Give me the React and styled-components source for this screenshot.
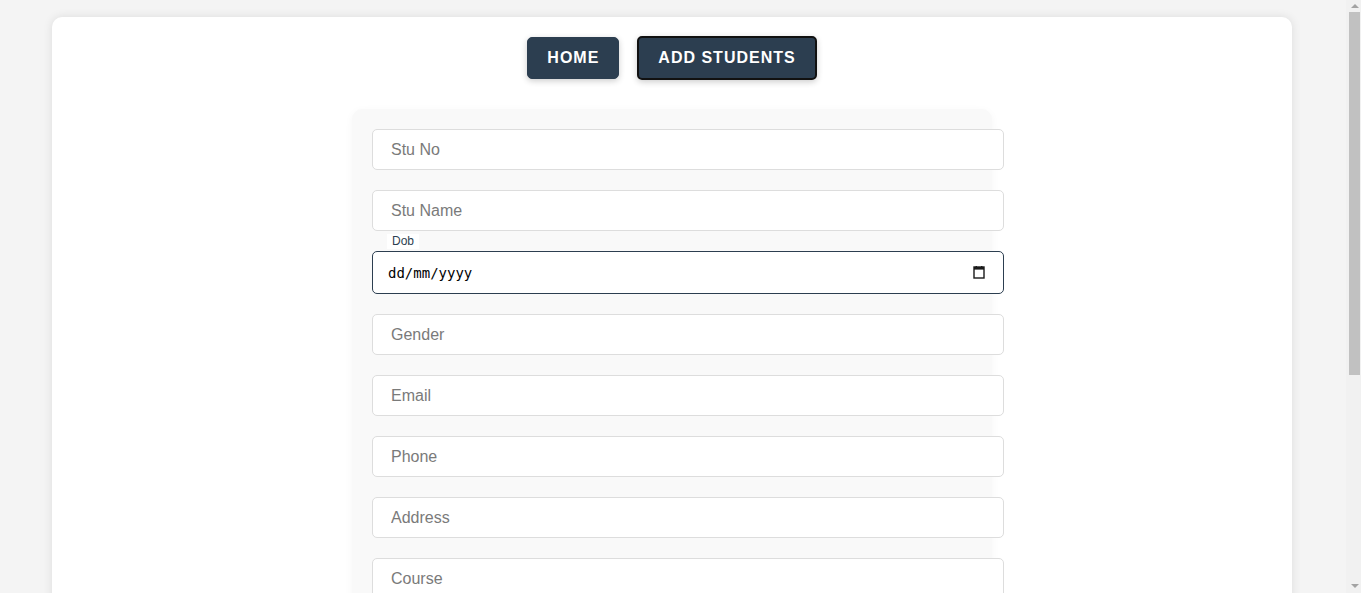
import React, { useState } from "react";
import styled, { createGlobalStyle } from "styled-components";

const GlobalStyle = createGlobalStyle`
  html, body {
    margin: 0;
    background: #f4f4f4;
  }
  body {
    padding: 17px 17px 17px 0;
    font-family: "Liberation Sans", Arial, sans-serif;
  }
  * { box-sizing: border-box; }
`;

/* Decorative classic scrollbar, overlaid on the window's right edge */
const ScrollTrack = styled.div`
  position: fixed;
  top: 0;
  right: 0;
  width: 15px;
  height: 100vh;
  background: #f1f1f1;
  display: flex;
  flex-direction: column;
  align-items: stretch;
`;

const ScrollButton = styled.div`
  height: ${(p) => (p.$down ? "15px" : "12px")};
  display: flex;
  align-items: center;
  justify-content: center;
  padding-left: 2px;
  &::before {
    content: "";
    width: 0;
    height: 0;
    border-left: 4px solid transparent;
    border-right: 4px solid transparent;
    ${(p) =>
      p.$down
        ? "border-top: 4px solid #a3a3a3;"
        : "border-bottom: 4px solid #a3a3a3;"}
  }
`;

const ScrollThumb = styled.div`
  height: 363px;
  margin: 0 1px 0 3px;
  background: #c1c1c1;
`;

const ScrollSpacer = styled.div`
  flex: 1;
`;

const Container = styled.div`
  width: 1240px;
  min-height: 886px;
  margin: 0 auto;
  background: #ffffff;
  border-radius: 10px;
  box-shadow: 0 0 10px rgba(0, 0, 0, 0.1);
  padding: 19px 20px 20px;
  display: flex;
  flex-direction: column;
  align-items: center;
  gap: 29px;
`;

const Nav = styled.nav`
  display: flex;
  justify-content: center;
  align-items: center;
  gap: 18px;
`;

const NavButton = styled.button`
  padding: 11px 19px;
  background: #2c3e50;
  color: #ffffff;
  font-family: "Liberation Sans", Arial, sans-serif;
  font-size: 16px;
  font-weight: 700;
  line-height: 18px;
  letter-spacing: 1px;
  border: ${(p) => (p.$active ? "2px solid #111111" : "1px solid #2c3e50")};
  border-radius: 5px;
  box-shadow: 0 2px 6px rgba(0, 0, 0, 0.2);
  cursor: pointer;
`;

const FormPanel = styled.form`
  width: 640px;
  padding: 20px;
  background: #f9f9f9;
  border-radius: 10px;
  box-shadow: 0 2px 8px rgba(0, 0, 0, 0.04);
  display: flex;
  flex-direction: column;
  gap: 20px;
`;

const TextInput = styled.input`
  display: block;
  width: calc(100% + 32px);
  height: 41px;
  padding: 0 18px;
  border: 1px solid #dddddd;
  border-radius: 5px;
  background: #ffffff;
  font-family: "Liberation Sans", Arial, sans-serif;
  font-size: 16px;
  color: #333333;
  outline: none;
  &::placeholder {
    color: #7a7a7a;
  }
`;

const Field = styled.div`
  position: relative;
  width: calc(100% + 32px);
`;

const FloatLabel = styled.label`
  position: absolute;
  top: -17px;
  left: 15px;
  padding: 0 5px;
  background: #ffffff;
  font-family: "Liberation Sans", Arial, sans-serif;
  font-size: 12px;
  line-height: 15px;
  color: #2c3e50;
`;

const DateInput = styled.input`
  display: block;
  width: 100%;
  height: 43px;
  padding: 0 15px;
  border: 1px solid #2c3e50;
  border-radius: 5px;
  background: #ffffff;
  font-family: "DejaVu Sans Mono", monospace;
  font-size: 14px;
  color: #000000;
  outline: none;
  &::placeholder {
    color: #000000;
  }
`;

const CalendarIcon = styled.svg`
  position: absolute;
  right: 19px;
  top: 15px;
  width: 12px;
  height: 13px;
  pointer-events: none;
`;

const Submit = styled.button`
  display: block;
  width: calc(100% + 32px);
  height: 42px;
  margin-top: 10px;
  border: none;
  border-radius: 5px;
  background: #2c3e50;
  color: #ffffff;
  font-family: "Liberation Sans", Arial, sans-serif;
  font-size: 16px;
  font-weight: 700;
  letter-spacing: 1px;
`;

const fieldsBefore = ["Stu No", "Stu Name"];
const fieldsAfter = ["Gender", "Email", "Phone", "Address", "Course"];

export default function App() {
  const [dobType, setDobType] = useState("text");
  return (
    <>
      <GlobalStyle />
      <Container>
        <Nav>
          <NavButton type="button">HOME</NavButton>
          <NavButton type="button" $active>
            ADD STUDENTS
          </NavButton>
        </Nav>
        <FormPanel onSubmit={(e) => e.preventDefault()}>
          {fieldsBefore.map((f) => (
            <TextInput key={f} placeholder={f} />
          ))}
          <Field>
            <FloatLabel htmlFor="dob">Dob</FloatLabel>
            <DateInput
              id="dob"
              type={dobType}
              placeholder="dd/mm/yyyy"
              onFocus={() => setDobType("date")}
            />
            {dobType === "text" && (
              <CalendarIcon viewBox="0 0 12 13" aria-hidden="true">
                <rect x="1" y="1" width="10" height="11" fill="none" stroke="#1a1a1a" strokeWidth="1.4" />
                <rect x="1" y="1" width="10" height="2.6" fill="#1a1a1a" />
                <rect x="2.6" y="0" width="1.4" height="2" fill="#1a1a1a" />
                <rect x="8" y="0" width="1.4" height="2" fill="#1a1a1a" />
              </CalendarIcon>
            )}
          </Field>
          {fieldsAfter.map((f) => (
            <TextInput key={f} placeholder={f} />
          ))}
          <Submit type="submit">ADD STUDENT</Submit>
        </FormPanel>
      </Container>
      <ScrollTrack aria-hidden="true">
        <ScrollButton />
        <ScrollThumb />
        <ScrollSpacer />
        <ScrollButton $down />
      </ScrollTrack>
    </>
  );
}
